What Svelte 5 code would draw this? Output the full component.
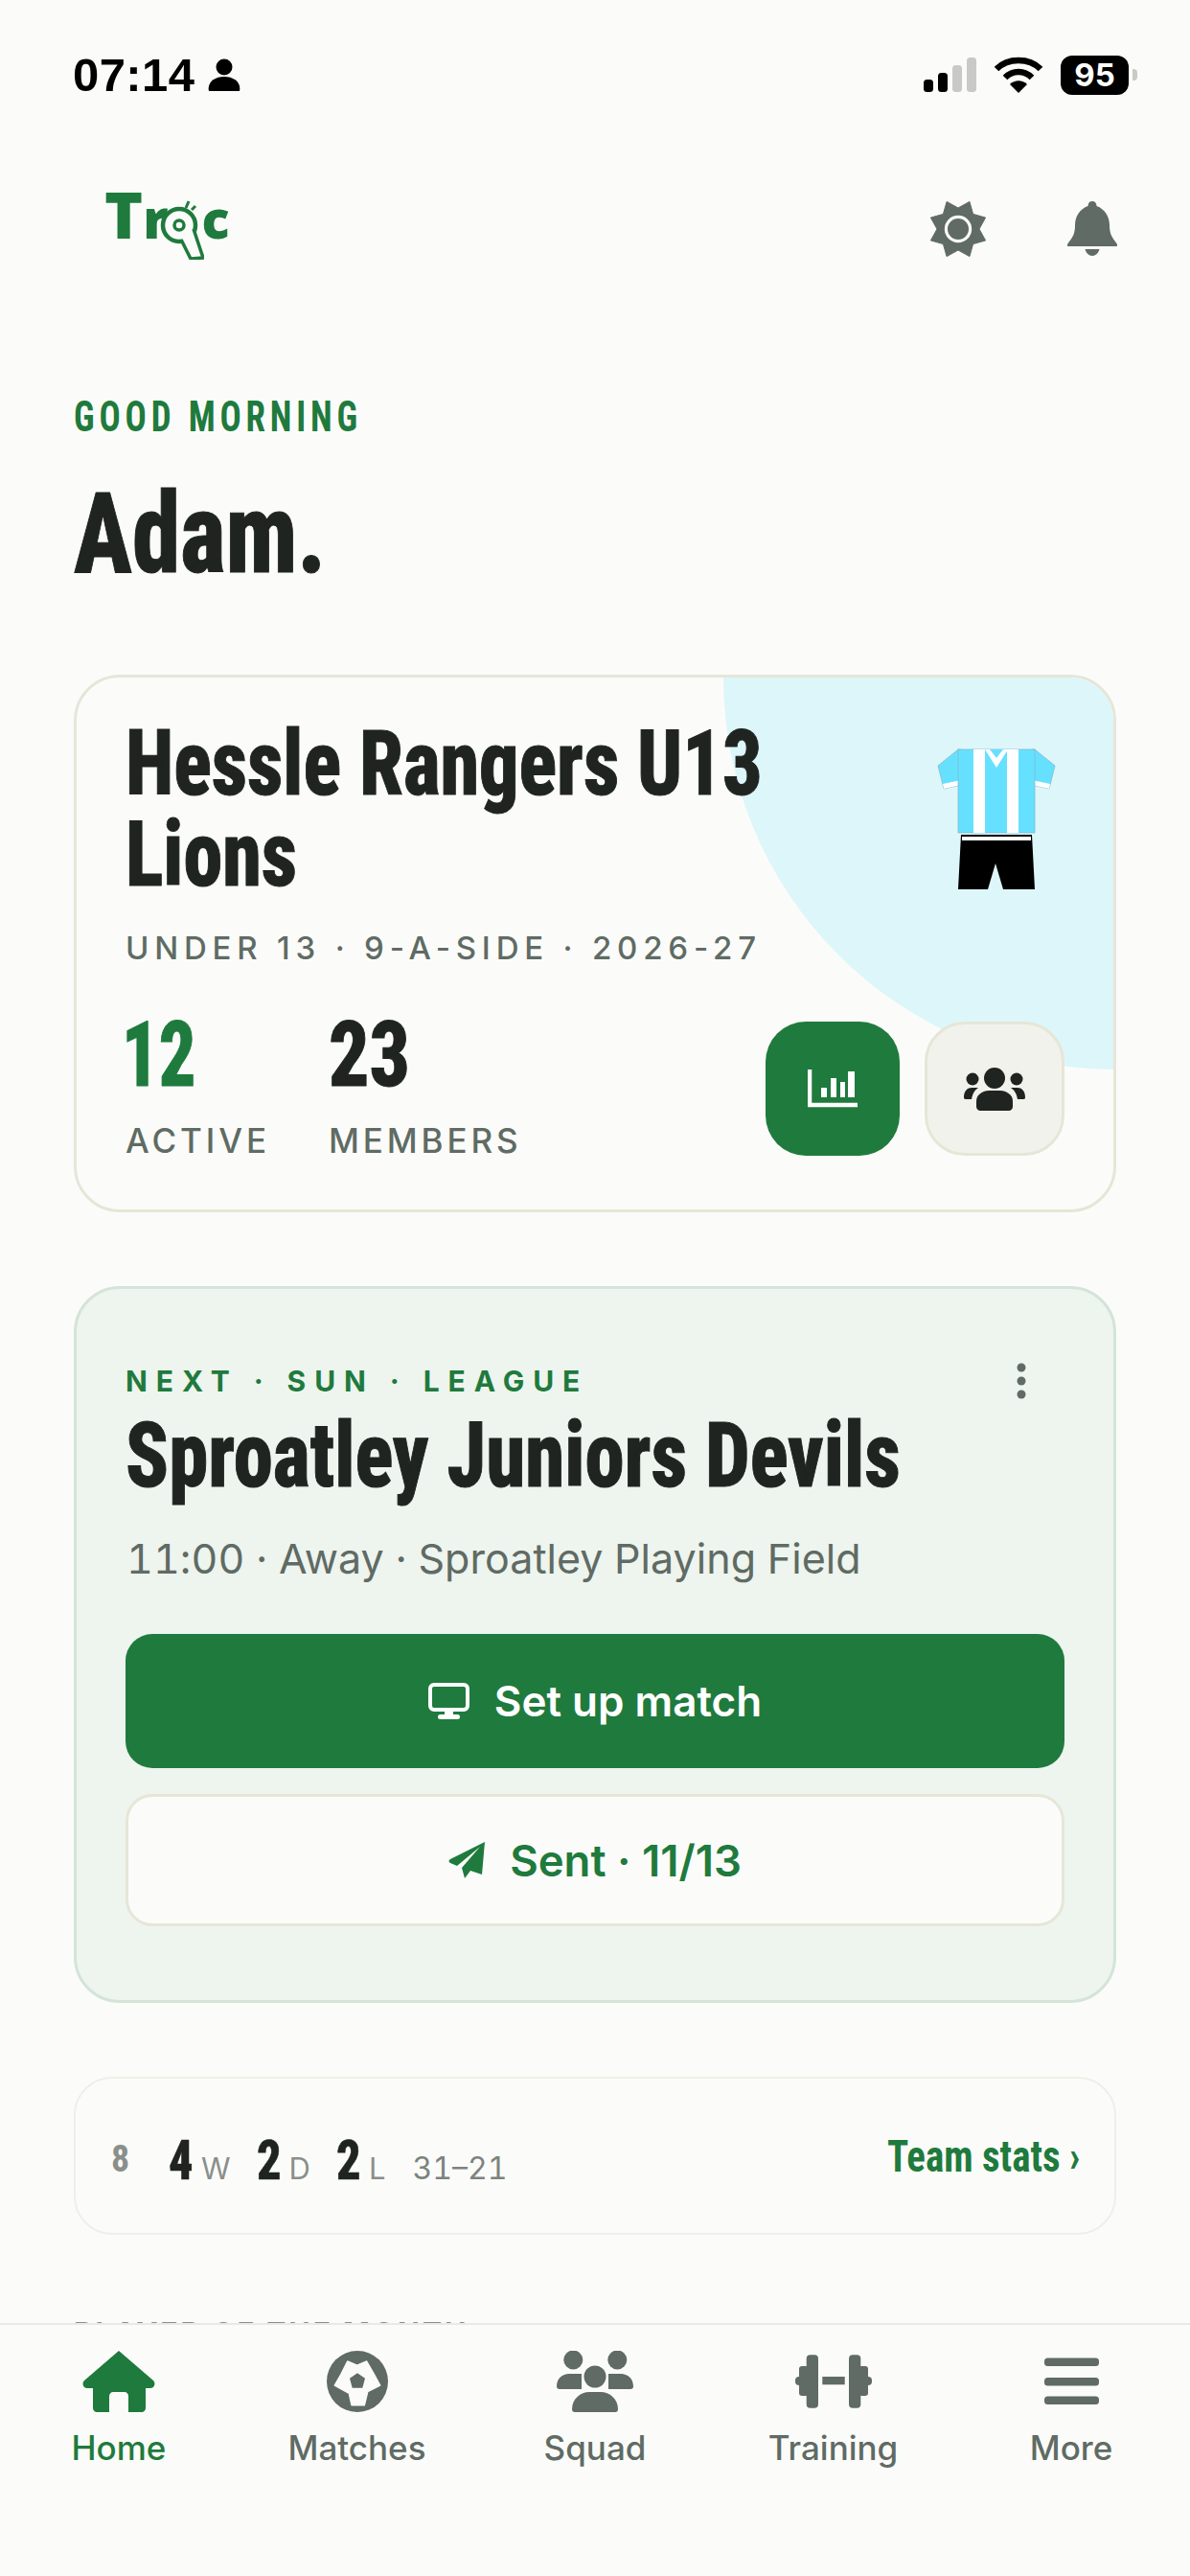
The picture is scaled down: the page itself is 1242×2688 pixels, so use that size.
<script>
	const tabs = [
		{ label: "Home", icon: "home", active: true },
		{ label: "Matches", icon: "ball" },
		{ label: "Squad", icon: "squad" },
		{ label: "Training", icon: "dumbbell" },
		{ label: "More", icon: "menu" },
	];
	const record = [
		{ n: 4, l: "W" },
		{ n: 2, l: "D" },
		{ n: 2, l: "L" },
	];

	// eight pointed cog for the settings icon
	const cog = Array.from({ length: 16 }, (_, i) => {
		const r = i % 2 === 0 ? 31 : 22;
		const a = ((i * 22.5 + 22.5) * Math.PI) / 180;
		return `${(30 + r * Math.sin(a)).toFixed(1)},${(29 - r * Math.cos(a)).toFixed(1)}`;
	}).join(" ");
</script>

<div class="screen">
	<div class="status">
		<div class="status-left">
			<span class="time">07:14</span>
			<svg viewBox="0 0 34 34" width="34" height="34">
				<circle cx="17" cy="9" r="8.5" fill="#000" />
				<path d="M1 34c-2-9 6-15 16-15s18 6 16 15z" fill="#000" />
			</svg>
		</div>
		<div class="status-right">
			<svg viewBox="0 0 55 36" width="55" height="36">
				<rect x="0" y="23" width="10" height="13" rx="3.5" fill="#000" />
				<rect x="15" y="16" width="10" height="20" rx="3.5" fill="#000" />
				<rect x="30" y="8" width="10" height="28" rx="3.5" fill="#c9c9c7" />
				<rect x="45" y="0" width="10" height="36" rx="3.5" fill="#c9c9c7" />
			</svg>
			<svg viewBox="0 0 52 40" width="52" height="40">
				<path d="M3 14C15 2 37 2 49 14" fill="none" stroke="#000" stroke-width="6.5" />
				<path d="M12 23C20 15 32 15 40 23" fill="none" stroke="#000" stroke-width="6.5" />
				<path d="M17 30c5-5 13-5 18 0l-9 9z" fill="#000" />
			</svg>
			<div class="battery">95</div>
			<div class="nub"></div>
		</div>
	</div>

	<header class="topbar">
		<div class="logo">
			<span class="logo-t">T</span>
			<span class="logo-r">r</span>
			<svg class="whistle" viewBox="0 0 48 68" width="48" height="68">
				<circle cx="22" cy="32" r="17" fill="#fbfcf9" stroke="#1f7a3d" stroke-width="4.5" />
				<circle cx="22" cy="32" r="5" fill="none" stroke="#1f7a3d" stroke-width="3.5" />
				<path d="M24 47l10 20 13-1-10-30" fill="#fbfcf9" stroke="#1f7a3d" stroke-width="3.5" />
				<path d="M32 7l-3 7M39 12l-4 4" stroke="#1f7a3d" stroke-width="3" />
			</svg>
			<span class="logo-c">c</span>
		</div>
		<div class="top-icons">
			<svg viewBox="0 0 60 58" width="60" height="58">
				<polygon points={cog} fill="#5f6b64" stroke="#5f6b64" stroke-width="1" stroke-linejoin="round" />
				<circle cx="30" cy="29" r="12.6" fill="none" stroke="#fbfcf9" stroke-width="3.2" />
			</svg>
			<svg viewBox="0 0 52 58" width="52" height="58">
				<path d="M26 0c3 0 4.5 2 4.5 5C39 8 44 16 44 25c0 8 2 12 6 17l2 3c1 2 0 2-2 2H2c-2 0-3 0-2-2l2-3c4-5 6-9 6-17C8 16 13 8 21.5 5c0-3 1.500-5 4.500-5z" fill="#5f6b64" />
				<path d="M18.500 50h15c-1 4-4 7-7.500 7s-6.500-3-7.500-7z" fill="#5f6b64" />
			</svg>
		</div>
	</header>

	<section class="greeting">
		<div class="eyebrow">GOOD MORNING</div>
		<h1>Adam.</h1>
	</section>

	<section class="team-card">
		<div class="blob"></div>
		<div class="team-top">
			<h2>Hessle Rangers U13 Lions</h2>
			<svg class="kit" viewBox="0 0 124 148" width="124" height="148">
				<path d="M22 1L1 18l6 24 18-4V1z" fill="#66e0ff" stroke="#7fb6c4" stroke-width=".7" />
				<path d="M102 1l21 17-6 24-18-4V1z" fill="#66e0ff" stroke="#7fb6c4" stroke-width=".7" />
				<path d="M6 37l19-4v5l-18 4zM118 37l-19-4v5l18 4z" fill="#fff" />
				<rect x="22" y="1" width="80" height="87" fill="#66e0ff" stroke="#7fb6c4" stroke-width=".7" />
				<rect x="38" y="1" width="12" height="87" fill="#fff" />
				<rect x="73" y="1" width="12" height="87" fill="#fff" />
				<path d="M50 1h24L62 20z" fill="#fff" />
				<path d="M55 1h14l-7 9z" fill="#66e0ff" />
				<path d="M25 90h74l3 57H69l-8-27-8 27H22z" fill="#000" />
				<rect x="26" y="92" width="72" height="4" fill="#fff" />
			</svg>
		</div>
		<div class="team-meta">UNDER 13 · 9-A-SIDE · 2026-27</div>
		<div class="team-bottom">
			<div class="stats">
				<div class="stat">
					<div class="stat-num green">12</div>
					<div class="stat-label">ACTIVE</div>
				</div>
				<div class="stat">
					<div class="stat-num">23</div>
					<div class="stat-label">MEMBERS</div>
				</div>
			</div>
			<div class="team-btns">
				<div class="square-btn primary">
					<svg viewBox="0 0 52 40" width="52" height="40">
						<path d="M2 0v37h50" fill="none" stroke="#fff" stroke-width="4.500" />
						<rect x="14" y="19" width="6" height="10" fill="#fff" />
						<rect x="24" y="9" width="6" height="20" fill="#fff" />
						<rect x="34" y="13" width="5" height="16" fill="#fff" />
						<rect x="42" y="2" width="7" height="27" fill="#fff" />
					</svg>
				</div>
				<div class="square-btn plain">
					<svg viewBox="0 0 64 45" width="64" height="45">
						<circle cx="32" cy="11" r="11" fill="#1f2421" />
						<circle cx="9" cy="12" r="6.500" fill="#1f2421" />
						<circle cx="55" cy="12" r="6.500" fill="#1f2421" />
						<path d="M13 41v-6c0-7 7-11 13-11h12c6 0 13 4 13 11v6c0 2-2 4-4 4H17c-2 0-4-2-4-4z" fill="#1f2421" />
						<path d="M0 31c0-7 4-10 8-10h7c-4 3-6 6-7 12H3c-2 0-3 0-3-2zM64 31c0-7-4-10-8-10h-7c4 3 6 6 7 12h5c2 0 3 0 3-2z" fill="#1f2421" />
					</svg>
				</div>
			</div>
		</div>
	</section>

	<section class="match-card">
		<div class="match-head">
			<div class="match-tag">NEXT · SUN · LEAGUE</div>
			<svg viewBox="0 0 10 38" width="10" height="38">
				<circle cx="5" cy="5" r="4.500" fill="#5f6b64" />
				<circle cx="5" cy="19" r="4.500" fill="#5f6b64" />
				<circle cx="5" cy="33" r="4.500" fill="#5f6b64" />
			</svg>
		</div>
		<h2>Sproatley Juniors Devils</h2>
		<p class="match-info">11:00 · Away · Sproatley Playing Field</p>
		<div class="cta primary">
			<svg viewBox="0 0 43 38" width="43" height="38">
				<rect x="2" y="2" width="39" height="26" rx="4" fill="none" stroke="#fff" stroke-width="4" />
				<rect x="17" y="28" width="9" height="6" fill="#fff" />
				<rect x="10" y="33" width="23" height="5" rx="2.500" fill="#fff" />
			</svg>
			<span>Set up match</span>
		</div>
		<div class="cta secondary">
			<svg viewBox="0 0 38 38" width="38" height="38">
				<path d="M38 0L35 34 23 30l-6 8-3-11L33 5 9 25 2 22c-2-1-2-3 0-4z" fill="#1f7a3d" />
			</svg>
			<span>Sent · 11/13</span>
		</div>
	</section>

	<section class="record">
		<div class="record-left">
			<span class="played">8</span>
			{#each record as r}
				<span class="r-num">{r.n}</span><span class="r-letter">{r.l}</span>
			{/each}
			<span class="goals">31–21</span>
		</div>
		<div class="team-stats">Team stats ›</div>
	</section>

	<div class="next-label">PLAYER OF THE MONTH</div>

	<nav class="tabbar">
		{#each tabs as tab}
			<div class="tab" class:active={tab.active}>
				<svg viewBox="0 0 80 64" width="80" height="64">
					{#if tab.icon === "home"}
						<path d="M40 0l36 31c3 3 1 8-3 8h-5v21c0 2-2 4-4 4H50V47c0-2-2-4-4-4H34c-2 0-4 2-4 4v17H17c-2 0-4-2-4-4V39H7c-4 0-6-5-3-8z" fill="currentColor" />
					{:else if tab.icon === "ball"}
						<circle cx="40" cy="32" r="32" fill="currentColor" />
						<polygon points="29.700,11 39.700,15.300 49.700,11 57.300,24.300 63.700,36 50.700,42.700 47.300,56.700 34,56.700 31.300,44.300 16.300,36 23,24.300" fill="#fbfcf9" stroke="#fbfcf9" stroke-width="1.500" stroke-linejoin="round" />
						<polygon points="40,23.300 48,28.700 45.300,38.700 34.700,38.700 32,28.700" fill="currentColor" />
					{:else if tab.icon === "squad"}
						<circle cx="17.300" cy="9.500" r="10" fill="currentColor" />
						<circle cx="63.300" cy="9.500" r="10" fill="currentColor" />
						<path d="M0 37c0-8 6-13 13-13h13v16H3c-2 0-3-1-3-3zM80 37c0-8-6-13-13-13H54v16h23c2 0 3-1 3-3z" fill="currentColor" />
						<circle cx="40" cy="27" r="14" fill="#fbfcf9" />
						<circle cx="40" cy="27" r="11.500" fill="currentColor" />
						<path d="M16 61c0-11 9-18 18-18h12c9 0 18 7 18 18q0 3-3 3H19q-3 0-3-3z" fill="currentColor" />
					{:else if tab.icon === "dumbbell"}
						<rect x="11.700" y="4.300" width="12.300" height="55.400" rx="4" fill="currentColor" />
						<rect x="56" y="4.300" width="12.300" height="55.400" rx="4" fill="currentColor" />
						<rect x="28.300" y="27" width="23.400" height="8.300" fill="currentColor" />
						<rect x="4" y="16" width="10" height="31" rx="3" fill="currentColor" />
						<rect x="66" y="16" width="10" height="31" rx="3" fill="currentColor" />
						<rect x="0" y="27" width="8" height="9" rx="4" fill="currentColor" />
						<rect x="72" y="27" width="8" height="9" rx="4" fill="currentColor" />
					{:else}
						<rect x="12" y="7.500" width="57" height="8.500" rx="3.500" fill="currentColor" />
						<rect x="12" y="28" width="57" height="8.500" rx="3.500" fill="currentColor" />
						<rect x="12" y="47.500" width="57" height="8.500" rx="3.500" fill="currentColor" />
					{/if}
				</svg>
				<span>{tab.label}</span>
			</div>
		{/each}
	</nav>
</div>

<style>
	:global(body) {
		margin: 0;
		background: #fbfcf9;
	}

	.screen {
		position: relative;
		width: 1242px;
		height: 2688px;
		overflow: hidden;
		background: #fbfcf9;
		font-family: Inter, "Liberation Sans", sans-serif;
		color: #1f2421;
	}

	.status {
		display: flex;
		justify-content: space-between;
		align-items: center;
		height: 38px;
		padding: 59px 55px 0 76px;
	}

	.status-left {
		display: flex;
		align-items: center;
		gap: 14px;
	}

	.time {
		font-family: "Liberation Sans", sans-serif;
		font-size: 49px;
		font-weight: 700;
		letter-spacing: 0.4px;
		color: #000;
	}

	.status-right {
		display: flex;
		align-items: center;
		gap: 18px;
	}

	.battery {
		width: 71px;
		height: 41px;
		border-radius: 12px;
		background: #000;
		color: #fff;
		font-weight: 700;
		font-size: 33px;
		line-height: 41px;
		text-align: center;
	}

	.nub {
		width: 5px;
		height: 12px;
		margin-left: -14px;
		border-radius: 0 4px 4px 0;
		background: #c9c9c7;
	}

	.topbar {
		display: flex;
		justify-content: space-between;
		align-items: flex-start;
		height: 72px;
		margin-top: 105px;
		padding: 8px 76px 0 109px;
		box-sizing: border-box;
	}

	.logo {
		display: flex;
		align-items: baseline;
		color: #1f7a3d;
		font-family: "Open Sans", sans-serif;
		font-weight: 800;
		line-height: 50px;
		margin-top: -29px;
	}

	.logo-t {
		font-size: 68px;
		letter-spacing: -1px;
	}

	.logo-r {
		font-size: 56px;
		margin-left: 1px;
	}

	.whistle {
		margin: 0 -2px 0 -10px;
		transform: translateY(22px);
	}

	.logo-c {
		font-size: 54px;
		margin-left: -1px;
	}

	.top-icons {
		display: flex;
		align-items: center;
		gap: 84px;
	}

	.greeting {
		padding: 0 77px;
		margin-top: 138px;
	}

	.eyebrow {
		font-family: "Roboto Condensed", "Liberation Sans Narrow", sans-serif;
		font-weight: 700;
		font-size: 45px;
		letter-spacing: 5.9px;
		color: #1f7a3d;
		line-height: 46px;
		transform: scaleX(0.82);
		transform-origin: left;
	}

	h1,
	h2 {
		margin: 0;
		font-family: "Roboto Condensed", "Liberation Sans Narrow", sans-serif;
		font-weight: 800;
		-webkit-text-stroke: 1px currentColor;
		transform-origin: left;
	}

	h1 {
		font-size: 117px;
		line-height: 116px;
		margin-top: 41px;
		transform: scaleX(0.865);
	}

	.team-card {
		position: relative;
		overflow: hidden;
		box-sizing: border-box;
		width: 1088px;
		height: 561px;
		margin: 89px 77px 0;
		padding: 42px 51px 0;
		border: 3px solid #e6e6d8;
		border-radius: 48px;
	}

	.blob {
		position: absolute;
		left: 675px;
		top: -409px;
		width: 818px;
		height: 818px;
		border-radius: 50%;
		background: #ddf6fa;
	}

	.team-top {
		position: relative;
		display: flex;
		justify-content: space-between;
		align-items: flex-start;
	}

	.team-top h2 {
		width: 800px;
		font-size: 95px;
		line-height: 95px;
		transform: scaleX(0.865);
	}

	.kit {
		margin: 32px 9px 0 0;
	}

	.team-meta {
		position: relative;
		margin-top: 30px;
		font-size: 33px;
		font-weight: 500;
		letter-spacing: 5.8px;
		color: #5f6b64;
		line-height: 40px;
	}

	.team-bottom {
		position: relative;
		display: flex;
		justify-content: space-between;
		align-items: flex-end;
		margin-top: 44px;
	}

	.stats {
		display: flex;
		gap: 61px;
	}

	.stat-num {
		font-family: "Roboto Condensed", "Liberation Sans Narrow", sans-serif;
		font-weight: 800;
		font-size: 95px;
		line-height: 96px;
		-webkit-text-stroke: 1px currentColor;
		transform: scaleX(0.88);
		transform-origin: left;
	}

	.stat-num.green {
		margin-left: -4px;
		color: #1f7a3d;
		transform: scaleX(0.8);
	}

	.stat-label {
		margin-top: 21px;
		font-size: 35px;
		font-weight: 500;
		letter-spacing: 3.9px;
		color: #5f6b64;
		line-height: 40px;
	}

	.team-btns {
		display: flex;
		gap: 26px;
		margin-bottom: 4px;
	}

	.square-btn {
		box-sizing: border-box;
		display: flex;
		align-items: center;
		justify-content: center;
		width: 140px;
		height: 140px;
		border-radius: 42px;
	}

	.square-btn.primary {
		background: #1f7a3d;
	}

	.square-btn.plain {
		width: 146px;
		background: #f2f2ec;
		border: 3px solid #e6e6d8;
	}

	.match-card {
		box-sizing: border-box;
		width: 1088px;
		height: 748px;
		margin: 77px 77px 0;
		padding: 77px 51px 0;
		background: #eef4ee;
		border: 3px solid #d3e4d8;
		border-radius: 48px;
	}

	.match-head {
		display: flex;
		justify-content: space-between;
		align-items: center;
		height: 38px;
		padding-right: 40px;
	}

	.match-tag {
		font-size: 30px;
		font-weight: 700;
		letter-spacing: 8.9px;
		line-height: 38px;
		color: #1f7a3d;
	}

	.match-card h2 {
		margin-top: 12px;
		font-size: 95px;
		line-height: 94px;
		white-space: nowrap;
		transform: scaleX(0.872);
	}

	.match-info {
		margin: 35px 0 0 1px;
		font-size: 43px;
		font-variant-numeric: tabular-nums;
		letter-spacing: 0.05px;
		line-height: 50px;
		color: #5f6b64;
	}

	.cta {
		display: flex;
		align-items: center;
		justify-content: center;
		gap: 26px;
		box-sizing: border-box;
		border-radius: 28px;
		font-size: 44px;
		font-weight: 600;
	}

	.cta.primary {
		height: 140px;
		margin-top: 54px;
		background: #1f7a3d;
		color: #fff;
	}

	.cta.secondary {
		height: 138px;
		margin-top: 27px;
		background: #fbfcf9;
		border: 3px solid #e6e6d8;
		color: #1f7a3d;
		font-size: 45.5px;
	}

	.record {
		display: flex;
		justify-content: space-between;
		align-items: center;
		box-sizing: border-box;
		width: 1088px;
		height: 165px;
		margin: 77px 77px 0;
		padding: 0 36px 0 37px;
		border: 2px solid #efefe8;
		border-radius: 40px;
	}

	.record-left {
		display: flex;
		align-items: baseline;
		padding-top: 8px;
	}

	.played {
		width: 60px;
		font-family: "Roboto Condensed", "Liberation Sans Narrow", sans-serif;
		font-weight: 700;
		font-size: 38px;
		color: #8a8f8b;
		position: relative;
		top: -8px;
	}

	.r-num {
		width: 34px;
		font-family: "Roboto Condensed", "Liberation Sans Narrow", sans-serif;
		font-weight: 800;
		font-size: 58px;
		-webkit-text-stroke: 0.6px currentColor;
		transform: scaleX(0.87);
		transform-origin: left;
	}

	.r-letter {
		font-size: 31px;
		color: #8a8f8b;
		margin-right: 27px;
	}

	.goals {
		font-size: 32px;
		font-variant-numeric: tabular-nums;
		color: #7d837f;
		margin-left: 1px;
	}

	.team-stats {
		font-family: "Roboto Condensed", "Liberation Sans Narrow", sans-serif;
		font-weight: 700;
		font-size: 46px;
		color: #1f7a3d;
		white-space: nowrap;
		transform: scaleX(0.89);
		transform-origin: right;
	}

	.next-label {
		margin: 84px 77px 0;
		font-size: 30px;
		font-weight: 700;
		letter-spacing: 3px;
		color: #8a8f8b;
	}

	.tabbar {
		position: absolute;
		left: 0;
		right: 0;
		bottom: 0;
		display: flex;
		justify-content: space-between;
		height: 264px;
		box-sizing: border-box;
		padding: 27px 0 0;
		background: #fbfcf9;
		border-top: 2px solid #e9eae4;
	}

	.tab {
		display: flex;
		flex-direction: column;
		align-items: center;
		gap: 16px;
		width: 248px;
		color: #5f6b64;
		font-size: 35px;
		font-weight: 500;
	}

	.tab.active {
		color: #1f7a3d;
	}
</style>
